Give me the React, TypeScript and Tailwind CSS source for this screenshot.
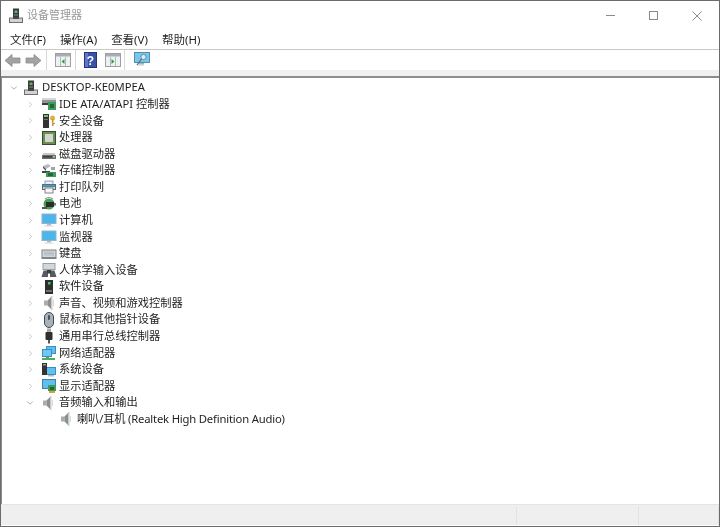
import type { ReactNode } from 'react';
import { ChevronDown, ChevronRight } from 'lucide-react';

const Svg = ({ children, size = 16 }: { children: ReactNode; size?: number }) => (
  <svg width={size} height={size} viewBox="0 0 16 16" className="shrink-0">
    {children}
  </svg>
);

const Computer = () => (
  <Svg>
    <rect x="5" y="0.5" width="6" height="9" fill="#3a3a3a" />
    <rect x="6.5" y="2.5" width="3" height="2.5" fill="#55b85f" />
    <rect x="6" y="6.5" width="4" height="1" fill="#8a8a8a" />
    <rect x="1" y="9.5" width="14" height="5.5" fill="#6e6e6e" />
    <rect x="2" y="10.5" width="12" height="3.5" fill="#d2d2d2" />
    <rect x="5" y="9" width="6" height="2" fill="#4a4a4a" />
  </Svg>
);

const Ide = () => (
  <Svg>
    <rect x="1" y="2" width="14" height="5" fill="#8f9499" />
    <rect x="1" y="2" width="14" height="2" fill="#d5d8da" />
    <rect x="1" y="7" width="7" height="2" fill="#3c3c3c" />
    <rect x="7" y="6" width="8" height="8" fill="#3f9a5a" />
    <rect x="9" y="8" width="4" height="4" fill="#22663a" />
  </Svg>
);

const Security = () => (
  <Svg>
    <rect x="2" y="1" width="6" height="14" fill="#333" />
    <rect x="3" y="2" width="4" height="2" fill="#7dbb6e" />
    <rect x="3" y="6" width="4" height="1" fill="#777" />
    <circle cx="11.5" cy="5" r="2.5" fill="#e0b040" />
    <rect x="11" y="6" width="1.5" height="7" fill="#c9982e" />
    <rect x="12" y="10" width="2" height="1.2" fill="#c9982e" />
  </Svg>
);

const Cpu = () => (
  <Svg>
    <rect x="1" y="1" width="14" height="14" fill="#2f4f3a" />
    <rect x="2" y="2" width="12" height="12" fill="#6f8f4f" />
    <rect x="4" y="4" width="8" height="8" fill="#d4d6d2" />
  </Svg>
);

const Disk = () => (
  <Svg>
    <rect x="2" y="7" width="12" height="2" fill="#c8c8c8" />
    <rect x="1" y="9" width="14" height="4" fill="#6d6d6d" />
    <rect x="2" y="10" width="9" height="1.5" fill="#3f3f3f" />
    <rect x="12" y="10" width="2" height="1.5" fill="#a4d08c" />
  </Svg>
);

const Storage = () => (
  <Svg>
    <path d="M2 3 L7 1 L10 3 L5 6 Z" fill="#b8bcc0" />
    <path d="M2 3 L5 6 L5 8 L2 5 Z" fill="#555" />
    <rect x="1" y="8" width="8" height="2" fill="#444" />
    <path d="M10 4 h4 v3 h-4z" fill="#9fa5a8" />
    <rect x="5" y="9" width="10" height="5" fill="#3f9a5a" />
    <rect x="7" y="10" width="5" height="3" fill="#22663a" />
  </Svg>
);

const Printer = () => (
  <Svg>
    <rect x="4" y="2" width="8" height="4" fill="#e8eef2" stroke="#6a7f90" strokeWidth="0.7" />
    <rect x="1" y="5" width="14" height="6" fill="#5f6a72" />
    <rect x="2" y="6" width="12" height="1.5" fill="#36a3d9" />
    <rect x="2" y="8" width="12" height="2" fill="#d6dade" />
    <rect x="4" y="9" width="8" height="5" fill="#f6f6f6" stroke="#555" strokeWidth="0.7" />
  </Svg>
);

const Battery = () => (
  <Svg>
    <circle cx="8" cy="8" r="5.5" fill="#3fa34d" />
    <path d="M4 3 Q8 0 12 3" stroke="#8a8f92" strokeWidth="1.2" fill="none" />
    <rect x="5" y="6" width="8" height="5" fill="#2c2c2c" />
    <rect x="1" y="11" width="5" height="2" fill="#555" />
    <rect x="13" y="7" width="2" height="2.5" fill="#777" />
  </Svg>
);

const Monitor = () => (
  <Svg>
    <rect x="0.5" y="1.5" width="15" height="10.5" fill="#8fb4cc" />
    <rect x="1.5" y="2.5" width="13" height="8.5" fill="#4db5ea" />
    <rect x="6" y="12" width="4" height="1.5" fill="#b0b8be" />
    <rect x="3.5" y="13.5" width="9" height="1" fill="#d0d4d8" />
  </Svg>
);

const Keyboard = () => (
  <Svg>
    <rect x="0.5" y="3.5" width="15" height="9.5" fill="#7f8488" />
    <rect x="1.5" y="4.5" width="13" height="6.5" fill="#d4d7da" />
    <path d="M3 6 h10 M3 7.5 h10 M3 9 h10" stroke="#a8acb0" strokeWidth="0.7" />
  </Svg>
);

const Hid = () => (
  <Svg>
    <rect x="1.5" y="1" width="13" height="7" fill="#9aa0a6" />
    <rect x="2.5" y="2" width="11" height="5" fill="#d4d7da" />
    <path d="M0.5 15 L2.5 8.5 H7 L7 15 Z" fill="#555b61" />
    <path d="M9 15 L9 8.5 H13.5 L15.5 15 Z" fill="#555b61" />
    <rect x="6" y="8" width="4" height="3.5" fill="#3a3f44" />
  </Svg>
);

const Software = () => (
  <Svg>
    <rect x="4" y="1" width="8" height="14" fill="#2e2e2e" />
    <rect x="7" y="3" width="2.5" height="2.5" fill="#4fbf5f" />
    <rect x="5" y="11" width="6" height="2" fill="#707070" />
  </Svg>
);

const Speaker = () => (
  <Svg>
    <rect x="3" y="5.5" width="3.5" height="5" fill="#a9adb0" />
    <path d="M6.5 5.5 L11 1 V15 L6.5 10.5 Z" fill="#8b9094" />
    <rect x="10" y="1" width="1.5" height="14" fill="#c9cccf" />
    <rect x="12" y="5" width="1" height="6" fill="#d8dadc" />
  </Svg>
);

const Mouse = () => (
  <Svg>
    <rect x="3.5" y="0.5" width="9" height="15" rx="4.5" fill="#a9b2b9" stroke="#3f4a54" />
    <rect x="7" y="3" width="2" height="5" rx="1" fill="#46525c" />
  </Svg>
);

const Usb = () => (
  <Svg>
    <rect x="6" y="0.5" width="4" height="4" fill="#a8a8a8" />
    <rect x="4.5" y="4" width="7" height="8" rx="1" fill="#2f2f2f" />
    <rect x="7" y="12" width="2" height="3.5" fill="#555" />
  </Svg>
);

const Network = () => (
  <Svg>
    <rect x="5" y="1" width="10" height="8" fill="#3a8ec4" />
    <rect x="6" y="2" width="8" height="6" fill="#5ec0ef" />
    <rect x="1" y="4" width="10" height="8" fill="#3a8ec4" />
    <rect x="2" y="5" width="8" height="6" fill="#6fc8f2" />
    <rect x="1" y="13" width="13" height="2" fill="#4caf50" />
    <rect x="5" y="12" width="3" height="1" fill="#888" />
  </Svg>
);

const SystemDev = () => (
  <Svg>
    <rect x="4" y="5" width="11" height="8" fill="#3a8ec4" />
    <rect x="5" y="6" width="9" height="6" fill="#5ec0ef" />
    <rect x="1" y="1" width="5" height="12" fill="#333" />
    <rect x="2" y="2" width="3" height="1.5" fill="#9a9a9a" />
    <rect x="7" y="13" width="6" height="1.5" fill="#b5bbc0" />
  </Svg>
);

const Display = () => (
  <Svg>
    <rect x="1" y="1" width="14" height="10" fill="#4a7fa6" />
    <rect x="2" y="2" width="12" height="8" fill="#5ec0ef" />
    <rect x="7" y="7" width="8" height="6" fill="#3f9a5a" />
    <rect x="9" y="9" width="4" height="3" fill="#22663a" />
    <rect x="8" y="13" width="6" height="2" fill="#e0a030" />
  </Svg>
);

const rows: { label: string; icon: ReactNode }[] = [
  { label: 'IDE ATA/ATAPI 控制器', icon: <Ide /> },
  { label: '安全设备', icon: <Security /> },
  { label: '处理器', icon: <Cpu /> },
  { label: '磁盘驱动器', icon: <Disk /> },
  { label: '存储控制器', icon: <Storage /> },
  { label: '打印队列', icon: <Printer /> },
  { label: '电池', icon: <Battery /> },
  { label: '计算机', icon: <Monitor /> },
  { label: '监视器', icon: <Monitor /> },
  { label: '键盘', icon: <Keyboard /> },
  { label: '人体学输入设备', icon: <Hid /> },
  { label: '软件设备', icon: <Software /> },
  { label: '声音、视频和游戏控制器', icon: <Speaker /> },
  { label: '鼠标和其他指针设备', icon: <Mouse /> },
  { label: '通用串行总线控制器', icon: <Usb /> },
  { label: '网络适配器', icon: <Network /> },
  { label: '系统设备', icon: <SystemDev /> },
  { label: '显示适配器', icon: <Display /> },
];

const menus = ['文件(F)', '操作(A)', '查看(V)', '帮助(H)'];

function ArrowIcon({ flip }: { flip?: boolean }) {
  return (
    <svg width="17" height="15" viewBox="0 0 17 15" className={flip ? 'shrink-0 -scale-x-100' : 'shrink-0'}>
      <path d="M1 7.5 L8 1.5 V5 H16 V10 H8 V13.5 Z" fill="#a3a3a3" stroke="#8a8a8a" strokeWidth="0.8" />
    </svg>
  );
}

function PaneIcon({ right }: { right?: boolean }) {
  return (
    <svg width="16" height="14" viewBox="0 0 16 14" className="shrink-0">
      <rect x="0.5" y="0.5" width="15" height="13" fill="#eef1f1" stroke="#9aa0a4" />
      <rect x="1" y="1" width="14" height="2.5" fill="#a8adb1" />
      <path d="M5.5 4 V13" stroke="#b5babd" />
      <path d="M10.5 4 V13" stroke="#b5babd" />
      {right ? <path d="M6.5 6 L9.5 8.5 L6.5 11 Z" fill="#2e9c4a" /> : <path d="M9.5 6 L6.5 8.5 L9.5 11 Z" fill="#2e9c4a" />}
    </svg>
  );
}

function HelpIcon() {
  return (
    <svg width="13" height="16" viewBox="0 0 13 16" className="shrink-0">
      <rect x="0.5" y="0.5" width="12" height="15" fill="#3a51a8" stroke="#26357a" />
      <rect x="1" y="1" width="3" height="14" fill="#5f78cc" />
      <text x="6.5" y="12.5" textAnchor="middle" fontSize="12" fontWeight="700" fill="#fff" fontFamily="'Liberation Sans', sans-serif">?</text>
    </svg>
  );
}

function ScanIcon() {
  return (
    <svg width="16" height="16" viewBox="0 0 16 16" className="shrink-0">
      <rect x="0.5" y="0.5" width="15" height="10" fill="#78c6ea" stroke="#4f8fb3" />
      <rect x="5" y="11" width="5" height="1.5" fill="#a9b2b8" />
      <rect x="3" y="12.5" width="7" height="1" fill="#c4cace" />
      <circle cx="9.5" cy="5" r="2.6" fill="#d9eef8" stroke="#5f7784" strokeWidth="0.8" />
      <path d="M7.5 7 L3 13" stroke="#5f6d76" strokeWidth="1.2" />
    </svg>
  );
}

const ToolSep = () => <div className="h-[20px] w-px shrink-0 bg-[#d9d9d9]" />;

export default function App() {
  return (
    <div className="flex h-[527px] w-[720px] flex-col overflow-hidden border-t border-r border-l border-[#6b6b6b] bg-white font-['Noto_Sans','Noto_Sans_CJK_SC',sans-serif] text-[#1f1f1f] blur-[0.35px]">
      {/* Title bar */}
      <div className="flex h-[29px] shrink-0 items-center">
        <div className="ml-[7px] flex items-center gap-[3px]">
          <Computer />
          <span className="text-[11px] text-[#9a9a9a]">设备管理器</span>
        </div>
        <div className="ml-auto flex items-center">
          <div className="h-px w-[9px] bg-[#8a8a8a]" />
          <div className="ml-[34px] h-[9px] w-[9px] border border-[#8a8a8a]" />
          <svg width="10" height="10" viewBox="0 0 10 10" className="mr-[17px] ml-[34px]">
            <path d="M0.5 0.5 L9.5 9.5 M9.5 0.5 L0.5 9.5" stroke="#808080" strokeWidth="0.9" />
          </svg>
        </div>
      </div>

      {/* Menu */}
      <div className="flex h-[19px] shrink-0 items-center gap-[14px] pl-[9px] text-[11.5px]">
        {menus.map((m) => (
          <span key={m}>{m}</span>
        ))}
      </div>

      {/* Toolbar */}
      <div className="flex h-[21px] shrink-0 items-center border-t border-[#c8c8c8] pl-[3px]">
        <ArrowIcon />
        <div className="ml-[4px]">
          <ArrowIcon flip />
        </div>
        <div className="ml-[4px]">
          <ToolSep />
        </div>
        <div className="ml-[8px]">
          <PaneIcon />
        </div>
        <div className="ml-[4px]">
          <ToolSep />
        </div>
        <div className="ml-[8px]">
          <HelpIcon />
        </div>
        <div className="ml-[8px]">
          <PaneIcon right />
        </div>
        <div className="ml-[3px]">
          <ToolSep />
        </div>
        <div className="ml-[9px]">
          <ScanIcon />
        </div>
      </div>
      <div className="h-[6px] shrink-0 bg-[#f0f0f0]" />

      {/* Tree */}
      <div className="flex min-h-0 flex-1 flex-col border-t-2 border-l border-[#8c8c8c] pt-[1.5px] text-[11.25px]">
        <div className="flex h-[16.58px] shrink-0 items-center">
          <ChevronDown size={10} strokeWidth={1.5} className="ml-[7px] shrink-0 text-[#808080]" />
          <div className="ml-[4px]">
            <Computer />
          </div>
          <span className="ml-[3px]">DESKTOP-KE0MPEA</span>
        </div>
        {rows.map((r) => (
          <div key={r.label} className="flex h-[16.58px] shrink-0 items-center">
            <ChevronRight size={9} strokeWidth={1.5} className="ml-[24px] shrink-0 text-[#a0a0a0]" />
            <div className="ml-[6px]">{r.icon}</div>
            <span className="ml-[2px] whitespace-nowrap">{r.label}</span>
          </div>
        ))}
        <div className="flex h-[16.58px] shrink-0 items-center">
          <ChevronDown size={10} strokeWidth={1.5} className="ml-[23px] shrink-0 text-[#808080]" />
          <div className="ml-[5px]">
            <Speaker />
          </div>
          <span className="ml-[3px]">音频输入和输出</span>
        </div>
        <div className="flex h-[16.58px] shrink-0 items-center">
          <div className="ml-[56px]">
            <Speaker />
          </div>
          <span className="ml-[3px] whitespace-nowrap tracking-[-0.18px]">喇叭/耳机 (Realtek High Definition Audio)</span>
        </div>
      </div>

      {/* Status bar */}
      <div className="flex h-[21px] shrink-0 border-t border-[#e4e4e4] bg-[#efefef] pt-[2px]">
        <div className="flex-1" />
        <div className="w-[122px] border-l border-[#e2e2e2]" />
        <div className="w-[81px] border-x border-[#e2e2e2]" />
      </div>
      <div className="h-[2px] shrink-0 border-b border-[#6b6b6b] bg-white" />
    </div>
  );
}
